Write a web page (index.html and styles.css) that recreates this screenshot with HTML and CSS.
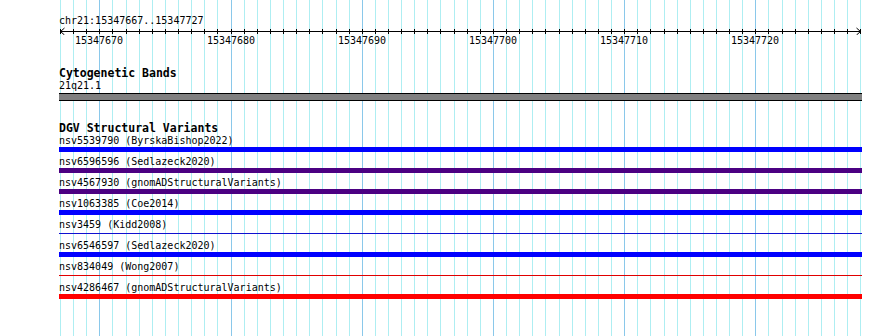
FILE: index.html
```html
<html>
<head>
  <link rel="stylesheet" href="styles.css">
</head>
<body>
  <div class="view">
    <svg class="grid" id="grid" width="803" height="336"></svg>

    <div class="ruler-track">
      <div class="location">chr21:15347667..15347727</div>
      <svg class="ruler" id="ruler" width="803" height="8">
        <line x1="1" y1="4.5" x2="802" y2="4.5" class="axis"></line>
        <polyline points="5.5,1 1.5,4.5 5.5,8" class="arrow"></polyline>
        <polyline points="797.5,1 801.5,4.5 797.5,8" class="arrow"></polyline>
      </svg>
      <div class="ruler-labels" id="ruler-labels"></div>
    </div>

    <div class="track cytobands">
      <h3 class="track-title">Cytogenetic Bands</h3>
      <div class="feature-label">21q21.1</div>
      <div class="band"></div>
    </div>

    <div class="track variants">
      <h3 class="track-title">DGV Structural Variants</h3>
      <div class="feature">
        <div class="feature-label">nsv5539790 (ByrskaBishop2022)</div>
        <div class="bar gain"></div>
      </div>
      <div class="feature">
        <div class="feature-label">nsv6596596 (Sedlazeck2020)</div>
        <div class="bar complex"></div>
      </div>
      <div class="feature">
        <div class="feature-label">nsv4567930 (gnomADStructuralVariants)</div>
        <div class="bar complex"></div>
      </div>
      <div class="feature">
        <div class="feature-label">nsv1063385 (Coe2014)</div>
        <div class="bar gain"></div>
      </div>
      <div class="feature">
        <div class="feature-label">nsv3459 (Kidd2008)</div>
        <div class="bar thin gain"></div>
      </div>
      <div class="feature">
        <div class="feature-label">nsv6546597 (Sedlazeck2020)</div>
        <div class="bar gain"></div>
      </div>
      <div class="feature">
        <div class="feature-label">nsv834049 (Wong2007)</div>
        <div class="bar thin loss"></div>
      </div>
      <div class="feature">
        <div class="feature-label">nsv4286467 (gnomADStructuralVariants)</div>
        <div class="bar loss"></div>
      </div>
    </div>
  </div>

  <script src="app.js"></script>
</body>
</html>
```

FILE: styles.css
```css
* {
  box-sizing: border-box;
  margin: 0;
  padding: 0;
}

body {
  font-family: "DejaVu Sans Mono", "Liberation Mono", monospace;
  font-size: 10px;
  color: #000;
  background-color: #fff;
}

.view {
  position: relative;
  width: 803px;
  height: 336px;
  margin-left: 59px;
}

.grid {
  position: absolute;
  top: 0;
  left: 0;
}

.grid line {
  stroke: #aeeef2;
  stroke-width: 1;
  shape-rendering: crispEdges;
}

.grid line.major {
  stroke: #8ac8ea;
}

.ruler-track,
.track {
  position: relative;
}

.ruler-track {
  height: 66px;
  padding-top: 15px;
}

.location {
  line-height: 12px;
}

.ruler {
  display: block;
}

.ruler .axis,
.ruler .tick {
  stroke: #000;
  stroke-width: 1;
  shape-rendering: crispEdges;
}

.ruler .arrow {
  fill: none;
  stroke: #000;
  stroke-width: 1;
}

.ruler-labels {
  position: relative;
  height: 12px;
  line-height: 12px;
}

.tick-label {
  position: absolute;
  top: 0;
  transform: translateX(-50%);
}

.track-title {
  font-size: 11.5px;
  font-weight: bold;
  line-height: 14px;
}

.feature-label {
  line-height: 12px;
  white-space: nowrap;
}

.band {
  height: 8px;
  margin-top: 1px;
  background-color: #808080;
  border-top: 1px solid #000;
  border-bottom: 1px solid #000;
}

.variants {
  margin-top: 20px;
}

.feature {
  height: 21px;
}

.bar {
  height: 5px;
}

.bar.gain {
  background-color: #0000ff;
}

.bar.complex {
  background-color: #4b0082;
}

.bar.loss {
  background-color: #ff0000;
}

.bar.thin {
  height: 1px;
  margin-top: 2px;
}

.bar.thin.gain {
  background-color: #1010d0;
}

.bar.thin.loss {
  background-color: #e00000;
}
```

FILE: app.js
```js
// grid lines, ruler ticks and ruler numbers for chr21:15347667..15347727
const START = 15347667;
const END = 15347727;
const PX_PER_BP = 13.12;
const SVG_NS = "http://www.w3.org/2000/svg";

const grid = document.getElementById("grid");
const ruler = document.getElementById("ruler");
const labels = document.getElementById("ruler-labels");

for (let pos = START; pos <= END + 1; pos++) {
  const x = Math.round(1 + (pos - START) * PX_PER_BP) + 0.5;

  const line = document.createElementNS(SVG_NS, "line");
  line.setAttribute("x1", x);
  line.setAttribute("x2", x);
  line.setAttribute("y1", 0);
  line.setAttribute("y2", 336);
  if (pos % 10 === 0) line.setAttribute("class", "major");
  grid.appendChild(line);

  const tick = document.createElementNS(SVG_NS, "line");
  tick.setAttribute("x1", x);
  tick.setAttribute("x2", x);
  tick.setAttribute("y1", 2);
  tick.setAttribute("y2", 7);
  tick.setAttribute("class", "tick");
  ruler.appendChild(tick);

  if (pos % 10 === 0) {
    const label = document.createElement("div");
    label.className = "tick-label";
    label.style.left = (x - 0.5) + "px";
    label.textContent = pos;
    labels.appendChild(label);
  }
}
```
